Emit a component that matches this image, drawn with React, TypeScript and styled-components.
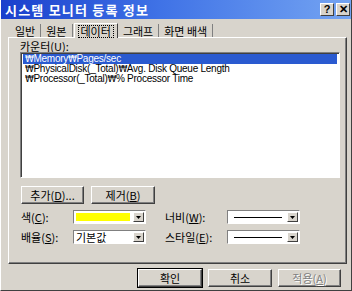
import React from "react";
import styled, { createGlobalStyle } from "styled-components";

const Global = createGlobalStyle`
  html, body { margin: 0; padding: 0; background: #d8d4cc; }
  body { font-family: "Liberation Sans", "Noto Sans CJK KR", sans-serif; font-size: 11px; color: #000; }
  * { box-sizing: border-box; }
`;

const FACE = "#d8d4cc";
const DARK = "#808080";

const Window = styled.div`
  width: 352px;
  height: 291px;
  background: ${FACE};
  border-left: 1px solid #fff;
  border-bottom: 1px solid #404040;
  border-right: 1px solid #404040;
  display: flex;
  flex-direction: column;
  overflow: hidden;
`;

const TitleBar = styled.div`
  height: 19px;
  flex: none;
  background: linear-gradient(to right, #1a3fcc 0%, #3f72e6 45%, #74a4f2 100%);
  display: flex;
  align-items: center;
  padding: 0 1px 0 4px;
`;

const Title = styled.div`
  flex: 1;
  color: #fff;
  font-weight: bold;
  font-size: 13px;
  font-family: "Noto Sans CJK KR", sans-serif;
  letter-spacing: 1.2px;
  line-height: 19px;
`;

const CaptionButton = styled.div`
  width: 14px;
  height: 13px;
  margin-left: 2px;
  background: ${FACE};
  border-top: 1px solid #fff;
  border-left: 1px solid #fff;
  border-right: 1px solid #404040;
  border-bottom: 1px solid #404040;
  display: flex;
  align-items: center;
  justify-content: center;
  font-weight: bold;
  font-size: 11px;
  line-height: 1;
  font-family: "Liberation Sans", sans-serif;
`;

const Body = styled.div`
  flex: 1;
  display: flex;
  flex-direction: column;
  padding: 5px 6px 0 7px;
`;

const TabStrip = styled.div`
  display: flex;
  align-items: flex-end;
  height: 13px;
  padding-left: 2px;
  position: relative;
  z-index: 1;
`;

const Tab = styled.div<{ $active?: boolean }>`
  height: ${(p) => (p.$active ? "15px" : "13px")};
  margin-bottom: ${(p) => (p.$active ? "-1px" : "0")};
  padding: 0 ${(p) => (p.$active ? "3px" : "5px")};
  font-family: "Noto Sans CJK KR", sans-serif;
  font-size: 11px;
  line-height: 12px;
  display: flex;
  align-items: center;
  border-right: 1px solid ${(p) => (p.$active ? "#404040" : DARK)};
  border-left: ${(p) => (p.$active ? "1px solid #fff" : "none")};
  border-top: ${(p) => (p.$active ? "1px solid #fff" : "none")};
  background: ${FACE};
  margin-left: ${(p) => (p.$active ? "1px" : "0")};
  white-space: nowrap;
`;

const TabFocus = styled.span`
  border: 1px dotted #000;
  padding: 0 2px;
  line-height: 11px;
`;

const Panel = styled.div`
  width: 339px;
  height: 227px;
  border-top: 1px solid #fff;
  border-left: 1px solid #fff;
  border-right: 1px solid #404040;
  border-bottom: 1px solid #404040;
  box-shadow: inset -1px -1px 0 ${DARK};
  padding: 3px 0 0 11px;
  display: flex;
  flex-direction: column;
`;

const Label = styled.div`
  font-family: "Noto Sans CJK KR", sans-serif;
  font-size: 11px;
  line-height: 11px;
  white-space: nowrap;
  flex: none;
`;

const U = styled.span`
  text-decoration: underline;
`;

const ListBox = styled.div`
  width: 320px;
  height: 126px;
  background: #fff;
  border-top: 1px solid ${DARK};
  border-left: 1px solid ${DARK};
  border-right: 1px solid #fff;
  border-bottom: 1px solid #fff;
  box-shadow: inset 1px 1px 0 #404040;
  padding: 1px 2px 0 2px;
`;

const ListItem = styled.div<{ $selected?: boolean }>`
  height: 10px;
  line-height: 10px;
  font-size: 10px;
  padding-left: 2px;
  white-space: nowrap;
  letter-spacing: -0.25px;
  overflow: hidden;
  background: ${(p) => (p.$selected ? "#2a5ad0" : "transparent")};
  color: ${(p) => (p.$selected ? "#fff" : "#000")};
`;

const Won = styled.span`
  font-family: "DejaVu Sans", sans-serif;
  font-size: 9px;
  letter-spacing: -0.5px;
`;

const ButtonRow = styled.div`
  display: flex;
  gap: 7px;
  margin-top: 8px;
  margin-left: 1px;
`;

const Button = styled.div<{ $w: number; $default?: boolean; $disabled?: boolean }>`
  width: ${(p) => p.$w}px;
  height: 18px;
  background: ${FACE};
  border-top: 1px solid #fff;
  border-left: 1px solid #fff;
  border-right: 1px solid #404040;
  border-bottom: 1px solid #404040;
  box-shadow: inset -1px -1px 0 ${DARK}${(p) => (p.$default ? ", 0 0 0 1px #000" : "")};
  display: flex;
  align-items: center;
  justify-content: center;
  font-family: "Noto Sans CJK KR", sans-serif;
  font-size: 11px;
  color: ${(p) => (p.$disabled ? DARK : "#000")};
  text-shadow: ${(p) => (p.$disabled ? "1px 1px 0 #fff" : "none")};
`;

const FormGrid = styled.div`
  display: grid;
  grid-template-columns: 52px 73px 19px 62px 73px;
  row-gap: 6px;
  align-items: center;
  margin-top: 6px;
  margin-left: 1px;
`;

const Spacer = styled.div``;

const Combo = styled.div`
  width: 73px;
  height: 14px;
  background: #fff;
  border-top: 1px solid ${DARK};
  border-left: 1px solid ${DARK};
  border-right: 1px solid #fff;
  border-bottom: 1px solid #fff;
  display: flex;
  align-items: center;
  padding: 1px 1px 1px 2px;
`;

const ComboValue = styled.div`
  flex: 1;
  height: 100%;
  display: flex;
  align-items: center;
  font-family: "Noto Sans CJK KR", sans-serif;
  font-size: 11px;
  line-height: 11px;
`;

const Swatch = styled.div`
  width: 54px;
  height: 8px;
  background: #ffff00;
`;

const LineSample = styled.div`
  width: 48px;
  height: 1px;
  background: #000;
  margin-left: 4px;
`;

const ArrowBtn = styled.div`
  width: 11px;
  height: 10px;
  background: ${FACE};
  border-top: 1px solid #fff;
  border-left: 1px solid #fff;
  border-right: 1px solid #404040;
  border-bottom: 1px solid #404040;
  display: flex;
  align-items: center;
  justify-content: center;
`;

const Arrow = () => (
  <svg width="5" height="3" viewBox="0 0 5 3">
    <path d="M0 0H5L2.5 3Z" fill="#000" />
  </svg>
);

const Footer = styled.div`
  display: flex;
  justify-content: flex-end;
  gap: 6px;
  padding: 5px 4px 0 0;
`;

const ComboBox: React.FC<{ children: React.ReactNode }> = ({ children }) => (
  <Combo>
    <ComboValue>{children}</ComboValue>
    <ArrowBtn>
      <Arrow />
    </ArrowBtn>
  </Combo>
);

const W = () => <Won>₩</Won>;

export default function App() {
  return (
    <>
      <Global />
      <Window>
        <TitleBar>
          <Title>시스템 모니터 등록 정보</Title>
          <CaptionButton>?</CaptionButton>
          <CaptionButton>✕</CaptionButton>
        </TitleBar>
        <Body>
          <TabStrip>
            <Tab>일반</Tab>
            <Tab>원본</Tab>
            <Tab $active>
              <TabFocus>데이터</TabFocus>
            </Tab>
            <Tab>그래프</Tab>
            <Tab>화면 배색</Tab>
          </TabStrip>
          <Panel>
            <Label>
              카운터(<U>U</U>):
            </Label>
            <ListBox>
              <ListItem $selected>
                <W />Memory<W />Pages/sec
              </ListItem>
              <ListItem>
                <W />PhysicalDisk(_Total)<W />Avg. Disk Queue Length
              </ListItem>
              <ListItem>
                <W />Processor(_Total)<W />% Processor Time
              </ListItem>
            </ListBox>
            <ButtonRow>
              <Button $w={63}>
                추가(<U>D</U>)...
              </Button>
              <Button $w={64}>
                제거(<U>B</U>)
              </Button>
            </ButtonRow>
            <FormGrid>
              <Label>
                색(<U>C</U>):
              </Label>
              <ComboBox>
                <Swatch />
              </ComboBox>
              <Spacer />
              <Label>
                너비(<U>W</U>):
              </Label>
              <ComboBox>
                <LineSample />
              </ComboBox>
              <Label>
                배율(<U>S</U>):
              </Label>
              <ComboBox>기본값</ComboBox>
              <Spacer />
              <Label>
                스타일(<U>E</U>):
              </Label>
              <ComboBox>
                <LineSample />
              </ComboBox>
            </FormGrid>
          </Panel>
          <Footer>
            <Button $w={64} $default>
              확인
            </Button>
            <Button $w={64}>취소</Button>
            <Button $w={63} $disabled>
              적용(<U>A</U>)
            </Button>
          </Footer>
        </Body>
      </Window>
    </>
  );
}
